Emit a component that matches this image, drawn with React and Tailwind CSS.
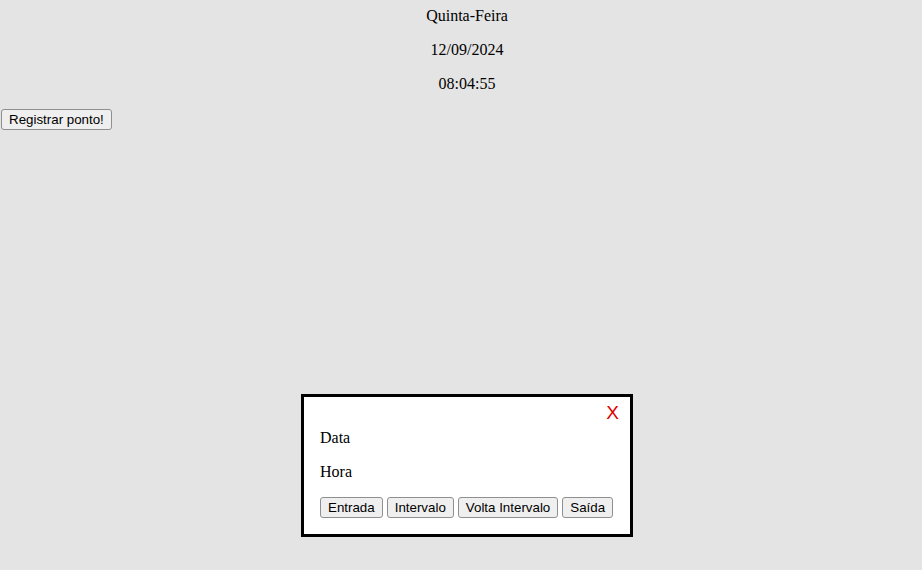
const days = ["Domingo", "Segunda-Feira", "Terça-Feira", "Quarta-Feira", "Quinta-Feira", "Sexta-Feira", "Sábado"];

const btn =
  "bg-[#efefef] border border-[#8f8f8f] rounded-[3px] px-[7px] py-[2px] text-[13.33px] leading-[15px] text-black font-['Liberation_Sans',Arial,sans-serif]";

const App = () => {
  const registros = ["Entrada", "Intervalo", "Volta Intervalo", "Saída"];

  return (
    <div className="relative w-full h-[570px] bg-[#e4e4e4] font-['Liberation_Serif','Times_New_Roman',serif] text-[16px] leading-[18px] text-black overflow-hidden">
      <div className="pt-[7px] pl-3 flex flex-col items-center gap-4">
        <p>{days[4]}</p>
        <p>12/09/2024</p>
        <p>08:04:55</p>
      </div>
      <button className={`${btn} mt-4 ml-px`}>Registrar ponto!</button>

      <div className="absolute left-[301px] top-[394px] w-[332px] bg-white border-[3px] border-black px-4 pt-8 pb-4">
        <span className="absolute top-[6px] right-[11px] text-[19px] leading-[20px] text-[#dd0000] font-['Liberation_Sans',Arial,sans-serif] cursor-pointer">
          X
        </span>
        <div className="flex flex-col gap-4">
          <p>Data</p>
          <p>Hora</p>
          <div className="flex gap-1">
            {registros.map((r) => (
              <button key={r} className={btn}>
                {r}
              </button>
            ))}
          </div>
        </div>
      </div>
    </div>
  );
};

export default App;
